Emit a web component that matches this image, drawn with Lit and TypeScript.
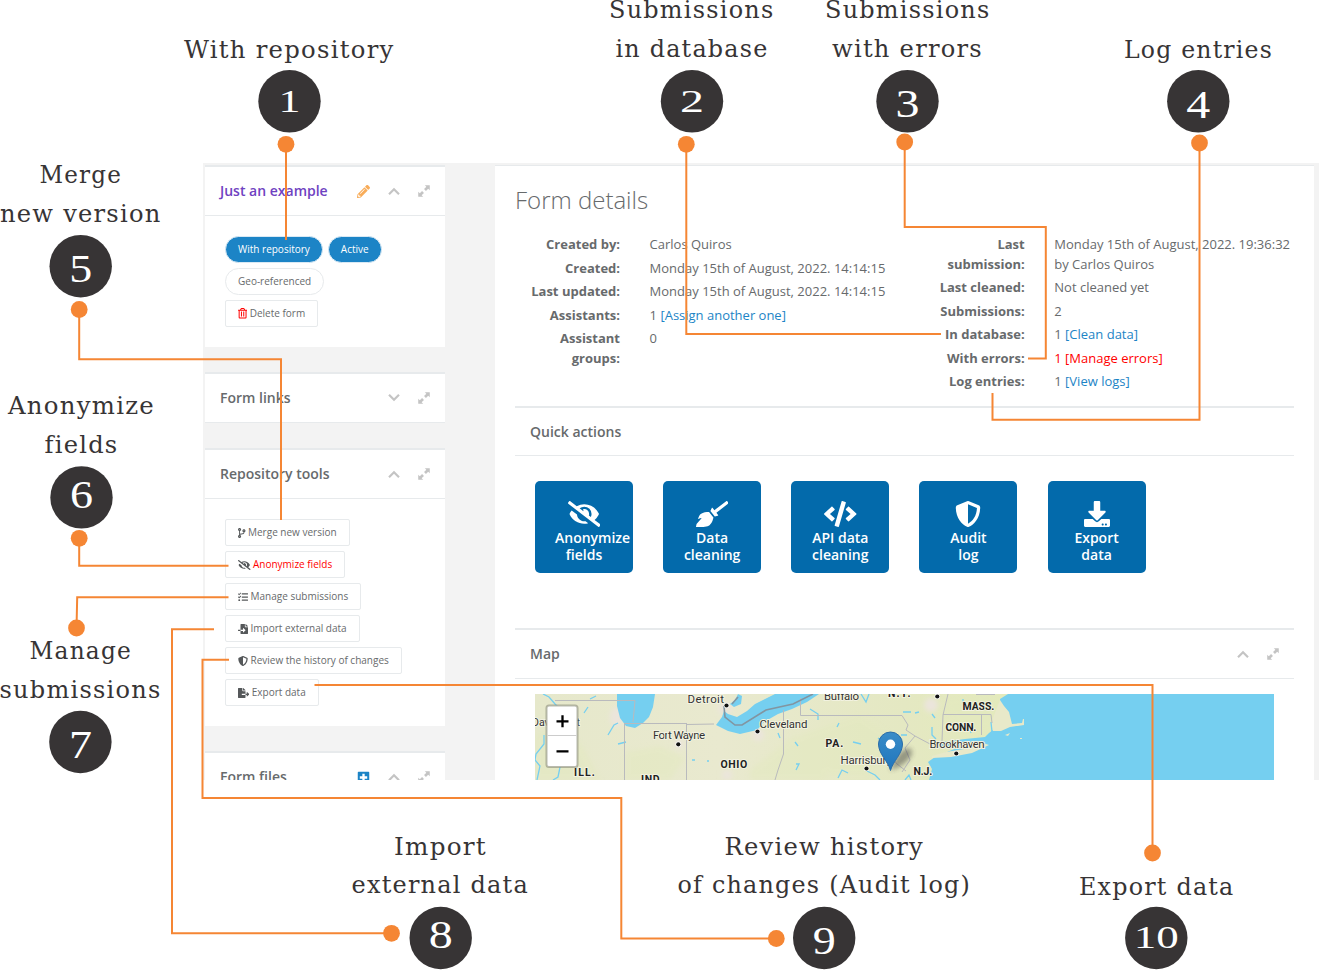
import { LitElement, html, svg, css } from "lit";
import { customElement } from "lit/decorators.js";

interface Glyph { w: number; d: string; }

const ICONS: Record<string, Glyph> = {
  eyeSlash: { w: 640, d: "M320 400c-75.85 0-137.25-58.71-142.9-133.11L72.2 185.82c-13.79 17.3-26.48 35.59-36.72 55.59a32.35 32.35 0 0 0 0 29.19C89.71 376.41 197.07 448 320 448c26.91 0 52.87-4 77.89-10.46L346 397.39a144.13 144.13 0 0 1-26 2.61zm313.82 58.1l-110.55-85.44a331.25 331.25 0 0 0 81.25-102.07 32.35 32.35 0 0 0 0-29.19C550.29 135.59 442.93 64 320 64a308.15 308.15 0 0 0-147.32 37.7L45.46 3.37A16 16 0 0 0 23 6.18L3.37 31.45A16 16 0 0 0 6.18 53.9l588.36 454.73a16 16 0 0 0 22.46-2.81l19.64-25.27a16 16 0 0 0-2.82-22.45zm-183.72-142l-39.3-30.38A94.75 94.75 0 0 0 416 256a94.76 94.76 0 0 0-121.31-92.21A47.65 47.65 0 0 1 304 192a46.64 46.64 0 0 1-1.54 10l-73.61-56.89A142.31 142.31 0 0 1 320 112a143.92 143.92 0 0 1 144 144c0 21.63-5.29 41.79-13.9 60.11z" },
  broom: { w: 640, d: "M256.47 216.77l86.73 109.18s-16.6 102.36-76.57 150.12C206.66 523.85 0 510.19 0 510.19s3.8-23.14 11-55.43l94.62-112.17c3.97-4.7-.87-11.62-6.65-9.5l-60.4 22.09c14.44-41.66 32.72-80.04 54.6-97.47 59.97-47.76 163.3-40.94 163.3-40.94zM636.53 31.03l-19.86-25c-5.49-6.9-15.52-8.05-22.41-2.56l-232.48 177.8-34.14-42.97c-5.09-6.41-15.14-5.21-18.59 2.21l-25.33 54.55 86.73 109.18 58.8-12.45c8-1.69 11.42-11.2 6.34-17.6l-34.09-42.92 232.48-177.8c6.89-5.48 8.04-15.53 2.55-22.44z" },
  code: { w: 640, d: "M278.9 511.5l-61-17.7c-6.4-1.8-10-8.5-8.2-14.9L346.2 8.7c1.8-6.4 8.5-10 14.9-8.2l61 17.7c6.4 1.8 10 8.5 8.2 14.9L293.8 503.3c-1.9 6.4-8.5 10.1-14.9 8.2zm-114-112.2l43.5-46.4c4.6-4.9 4.3-12.7-.8-17.2L117 256l90.6-79.7c5.1-4.5 5.5-12.3.8-17.2l-43.5-46.4c-4.5-4.8-12.1-5.1-17-.5L3.8 247.2c-5.1 4.7-5.1 12.8 0 17.5l144.1 135.1c4.9 4.6 12.5 4.4 17-.5zm327.2.6l144.1-135.1c5.1-4.7 5.1-12.8 0-17.5L492.1 112.1c-4.8-4.5-12.4-4.3-17 .5L431.6 159c-4.6 4.9-4.3 12.7.8 17.2L523 256l-90.6 79.7c-5.1 4.5-5.5 12.3-.8 17.2l43.5 46.4c4.5 4.9 12.1 5.1 17 .6z" },
  shield: { w: 512, d: "M466.5 83.7l-192-80a48.15 48.15 0 0 0-36.9 0l-192 80C27.7 91.1 16 108.6 16 128c0 198.5 114.5 335.7 221.5 380.3 11.8 4.9 25.1 4.9 36.9 0C360.1 472.6 496 349.3 496 128c0-19.4-11.7-36.9-29.5-44.3zM256.1 446.3l-.1-381 175.9 73.3c-3.3 151.4-82.1 261.1-175.8 307.7z" },
  download: { w: 512, d: "M216 0h80c13.3 0 24 10.7 24 24v168h87.7c17.8 0 26.7 21.5 14.1 34.1L269.7 378.3c-7.5 7.5-19.8 7.5-27.3 0L90.1 226.1c-12.6-12.6-3.7-34.1 14.1-34.1H192V24c0-13.3 10.7-24 24-24zm296 376v112c0 13.3-10.7 24-24 24H24c-13.3 0-24-10.7-24-24V376c0-13.3 10.7-24 24-24h146.7l49 49c20.1 20.1 52.5 20.1 72.6 0l49-49H488c13.3 0 24 10.7 24 24zm-124 88c0-11-9-20-20-20s-20 9-20 20 9 20 20 20 20-9 20-20zm64 0c0-11-9-20-20-20s-20 9-20 20 9 20 20 20 20-9 20-20z" },
  branch: { w: 384, d: "M384 144c0-44.2-35.8-80-80-80s-80 35.8-80 80c0 36.4 24.3 67.1 57.5 76.8-.6 16.1-4.2 28.5-11 36.9-15.4 19.2-49.3 22.4-85.2 25.7-28.2 2.6-57.4 5.4-81.3 16.9v-144c32.5-10.2 56-40.5 56-76.3 0-44.2-35.8-80-80-80S0 35.8 0 80c0 35.8 23.5 66.1 56 76.3v199.3C23.5 365.9 0 396.2 0 432c0 44.2 35.8 80 80 80s80-35.8 80-80c0-34-21.2-63.1-51.2-74.6 3.1-5.2 7.8-9.8 14.9-13.4 16.2-8.2 40.4-10.4 66.1-12.8 42.2-3.9 90-8.4 118.2-43.4 14-17.4 21.1-39.8 21.6-67.9 31.6-10.8 54.4-40.7 54.4-75.9zM80 64c8.8 0 16 7.2 16 16s-7.2 16-16 16-16-7.2-16-16 7.2-16 16-16zm0 384c-8.8 0-16-7.2-16-16s7.2-16 16-16 16 7.2 16 16-7.2 16-16 16zm224-320c8.8 0 16 7.2 16 16s-7.2 16-16 16-16-7.2-16-16 7.2-16 16-16z" },
  tasks: { w: 512, d: "M139.61 35.5a12 12 0 0 0-17 0L58.93 98.81l-22.7-22.12a12 12 0 0 0-17 0L3.53 92.41a12 12 0 0 0 0 17l47.59 47.4a12.78 12.78 0 0 0 17.61 0l15.59-15.62L156.52 69a12.09 12.09 0 0 0 .09-17zm0 159.19a12 12 0 0 0-17 0l-63.68 63.72-22.7-22.1a12 12 0 0 0-17 0L3.53 252a12 12 0 0 0 0 17L51 316.5a12.77 12.77 0 0 0 17.6 0l15.7-15.69 72.2-72.22a12 12 0 0 0 .09-16.9zM64 368c-26.49 0-48.59 21.5-48.59 48S37.53 464 64 464a48 48 0 0 0 0-96zm432 16H208a16 16 0 0 0-16 16v32a16 16 0 0 0 16 16h288a16 16 0 0 0 16-16v-32a16 16 0 0 0-16-16zm0-320H208a16 16 0 0 0-16 16v32a16 16 0 0 0 16 16h288a16 16 0 0 0 16-16V80a16 16 0 0 0-16-16zm0 160H208a16 16 0 0 0-16 16v32a16 16 0 0 0 16 16h288a16 16 0 0 0 16-16v-32a16 16 0 0 0-16-16z" },
  fileImport: { w: 512, d: "M16 288c-8.8 0-16 7.2-16 16v32c0 8.8 7.2 16 16 16h112v-64zm489-183L407.1 7c-4.5-4.5-10.6-7-17-7H384v128h128v-6.1c0-6.3-2.5-12.4-7-16.9zm-153 31V0H152c-13.3 0-24 10.7-24 24v264h128v-65.2c0-14.3 17.3-21.4 27.4-11.3L379 308c6.6 6.7 6.6 17.4 0 24l-95.7 96.4c-10.1 10.1-27.4 3-27.4-11.3V352H128v136c0 13.3 10.7 24 24 24h336c13.3 0 24-10.7 24-24V160H376c-13.2 0-24-10.8-24-24z" },
  fileExport: { w: 576, d: "M384 121.9c0-6.3-2.5-12.4-7-16.9L279.1 7c-4.5-4.5-10.6-7-17-7H256v128h128zM571 308l-95.7-96.4c-10.1-10.1-27.4-3-27.4 11.3V288h-64v64h64v65.2c0 14.3 17.3 21.4 27.4 11.3L571 332c6.6-6.6 6.6-17.4 0-24zm-379 28v-32c0-8.8 7.2-16 16-16h176V160H248c-13.2 0-24-10.8-24-24V0H24C10.7 0 0 10.7 0 24v464c0 13.3 10.7 24 24 24h336c13.3 0 24-10.7 24-24V352H208c-8.8 0-16-7.2-16-16z" },
  pencil: { w: 512, d: "M497.9 142.1l-46.1 46.1c-4.7 4.7-12.3 4.7-17 0l-111-111c-4.7-4.7-4.7-12.3 0-17l46.1-46.1c18.7-18.7 49.1-18.7 67.9 0l60.1 60.1c18.8 18.7 18.8 49.1 0 67.9zM284.2 99.8L21.6 362.4.4 483.9c-2.9 16.4 11.4 30.6 27.8 27.8l121.5-21.3 262.6-262.6c4.7-4.7 4.7-12.3 0-17l-111-111c-4.8-4.7-12.4-4.7-17.1 0zM124.1 339.9c-5.5-5.5-5.5-14.3 0-19.8l154-154c5.5-5.5 14.3-5.5 19.8 0s5.5 14.3 0 19.8l-154 154c-5.5 5.5-14.3 5.5-19.8 0zM88 424h48v36.3l-64.5 11.3-31.1-31.1L51.7 376H88v48z" },
  trash: { w: 448, d: "M268 416h24a12 12 0 0 0 12-12V188a12 12 0 0 0-12-12h-24a12 12 0 0 0-12 12v216a12 12 0 0 0 12 12zM432 80h-82.41l-34-56.7A48 48 0 0 0 274.41 0H173.59a48 48 0 0 0-41.16 23.3L98.41 80H16A16 16 0 0 0 0 96v16a16 16 0 0 0 16 16h16v336a48 48 0 0 0 48 48h288a48 48 0 0 0 48-48V128h16a16 16 0 0 0 16-16V96a16 16 0 0 0-16-16zM171.84 50.91A6 6 0 0 1 177 48h94a6 6 0 0 1 5.15 2.91L293.61 80H154.39zM368 464H80V128h288zm-212-48h24a12 12 0 0 0 12-12V188a12 12 0 0 0-12-12h-24a12 12 0 0 0-12 12v216a12 12 0 0 0 12 12z" },
  up: { w: 512, d: "M10 362L256 116l246 246-66 66-180-180L76 428z" },
  down: { w: 512, d: "M10 150l246 246 246-246-66-66-180 180L76 84z" },
  expand: { w: 512, d: "M290 10h212v212l-66-66-98 98-80-80 98-98zM10 290l66 66 98-98 80 80-98 98 66 66H10z" },
  plus: { w: 512, d: "M60 30h392q30 0 30 30v392q0 30-30 30H60q-30 0-30-30V60q0-30 30-30zM210 110v100H110v92h100v100h92V302h100v-92H302V110z" },
};

const icon = (name: string, cls = "") => {
  const g = ICONS[name];
  return html`<svg class="icon ${cls}" viewBox="0 0 ${g.w} 512" style="width:${g.w / 512}em"><path fill-rule="evenodd" d=${g.d}></path></svg>`;
};

@customElement("side-panel")
class SidePanel extends LitElement {
  static properties = { heading: {}, kind: {}, tool: {}, closed: { type: Boolean } };
  declare heading: string;
  declare kind: string;
  declare tool: string;
  declare closed: boolean;
  static styles = css`
    :host { display: block; background: #fff; border-top: 2px solid #e7eaec; }
    .head { display: flex; align-items: center; height: 48px; padding: 0 15px; border-bottom: 1px solid #e7eaec; font-size: 14px; font-weight: 600; }
    .title { flex: 1; white-space: nowrap; }
    .violet { color: #6f42c1; }
    .tools { display: flex; gap: 18px; color: #c4c4c4; font-size: 12px; }
    .icon { height: 1em; fill: currentColor; display: block; }
    .pencil { color: #f8ac59; font-size: 13px; }
    .plus { color: #1c84c6; font-size: 13px; }
  `;
  render() {
    return html`
      <div class="head">
        <span class="title ${this.kind ?? ""}">${this.heading}</span>
        <span class="tools">
          ${this.tool ? icon(this.tool, this.tool) : ""}
          ${icon(this.closed ? "down" : "up")}
          ${icon("expand")}
        </span>
      </div>
      <slot></slot>`;
  }
}

const INK = "#373435";
const LABELS: [string, number, number, number][] = [
  ["With repository", 184, 58, 210.5],
  ["Submissions", 609, 18, 165.5], ["in database", 615.5, 56.5, 153],
  ["Submissions", 825, 18, 165.5], ["with errors", 832, 56.5, 151],
  ["Log entries", 1124, 58, 149],
  ["Merge", 39.5, 183, 82.5], ["new version", 0, 221.5, 161.5],
  ["Anonymize", 8, 414.3, 147], ["fields", 44.5, 452.7, 74],
  ["Manage", 29.5, 658.7, 102.5], ["submissions", -0.5, 697.7, 162],
  ["Import", 394, 854.7, 93], ["external data", 351.5, 893.4, 177.5],
  ["Review history", 724.5, 854.7, 199.5], ["of changes (Audit log)", 677.5, 893.4, 293.5],
  ["Export data", 1079, 894.6, 155.5],
];
const BADGES: [string, number, number, number, number, number][] = [
  ["1", 289.5, 101.3, 111.7, 32, 22], ["2", 692, 101.3, 111.7, 32, 24],
  ["3", 907.5, 101.3, 116.8, 40, 24], ["4", 1198.3, 101.3, 117.6, 40, 24],
  ["5", 80.7, 266.2, 282.3, 40, 23], ["6", 81.5, 497.4, 507.5, 40, 23],
  ["7", 80.4, 742, 757.8, 40, 23], ["8", 440.7, 938, 948, 40, 24],
  ["9", 824.2, 938, 953.5, 40, 23], ["10", 1156.3, 938, 948, 32, 45],
];
const LEADS: [number, number, string][] = [
  [286, 144.3, "V240"],
  [686.3, 144.3, "V334H941"],
  [904.7, 142, "V227H1045.8V358.5H1028"],
  [1199.5, 143, "V419.8H992.5V393"],
  [79.2, 309.5, "V359.2H281V520"],
  [79.2, 538.3, "V565.8H228.5"],
  [76.5, 628, "L77.2 597.2H228.5"],
  [391.5, 933.3, "H172V629.3H214"],
  [776.3, 938.5, "H621.3V798H202.5V659.8H229"],
  [1152.5, 853, "V685H314.5"],
];

const TOOLS: [string, string, string][] = [
  ["branch", "Merge new version", ""], ["eyeSlash", "Anonymize fields", "danger"],
  ["tasks", "Manage submissions", ""], ["fileImport", "Import external data", ""],
  ["shield", "Review the history of changes", ""], ["fileExport", "Export data", ""],
];
const ACTIONS: [string, string, string][] = [
  ["eyeSlash", "Anonymize", "fields"], ["broom", "Data", "cleaning"], ["code", "API data", "cleaning"],
  ["shield", "Audit", "log"], ["download", "Export", "data"],
];
const row = (k: unknown, v: unknown) => html`<div class="row"><dt>${k}</dt><dd>${v}</dd></div>`;

@customElement("app-root")
class AppRoot extends LitElement {
  static styles = css`
    :host { display: block; position: relative; width: 1320px; height: 970px; overflow: hidden; background: #fff;
      font: 13px/19.5px "Open Sans", "Noto Sans", sans-serif; color: #676a6c; }
    * { box-sizing: border-box; }
    .shell { display: flex; margin: 163px 1px 0 203px; width: 1116px; height: 617px; overflow: hidden; background: #f3f3f3; padding: 2px 5px 0 2px; }
    .side { display: flex; flex-direction: column; gap: 25px; width: 240px; margin-right: 50px; flex: none; }
    .icon { height: 1em; fill: currentColor; display: inline-block; }
    .body { display: flex; flex-direction: column; align-items: flex-start; gap: 5px; padding: 20px; }
    .pair { display: flex; gap: 5px; }
    .first { height: 131px; }
    .stack { height: 227px; }
    .btn { display: inline-flex; align-items: center; gap: 2.5px; height: 27px; padding: 0 12px; border: 1px solid #e7eaec; border-radius: 2px; font-size: 10px; line-height: 15px; white-space: nowrap; background: #fff; }
    .btn .icon { color: #55585a; font-size: 10px; }
    .pill { border-radius: 14px; }
    .blue { background: #1c84c6; color: #fff; border-color: #d9e9f4; }
    .danger { color: #ff0000; }
    .btn .red { color: #ff0000; font-size: 10.5px; }
    .main { flex: 1; background: #fff; border-top: 1px solid #e7eaec; padding: 20px 20px 0; }
    h1 { margin: 0; height: 49px; font-size: 24px; font-weight: 300; line-height: 27px; }
    .info { display: grid; grid-template-columns: 404.7px 374px; height: 171px; }
    dl { margin: 0; }
    .row { display: flex; gap: 29.6px; margin-bottom: 4px; }
    dt { width: 105px; flex: none; text-align: right; font-weight: 700; }
    dd { margin: 0; white-space: nowrap; }
    a { color: #1c84c6; }
    .sub { display: flex; align-items: center; height: 50px; border-top: 2px solid #e7eaec; border-bottom: 1px solid #e7eaec; padding: 0 15px; font-size: 14px; font-weight: 600; }
    .map-head { height: 51px; }
    .sub span { flex: 1; }
    .sub .icon { color: #c4c4c4; font-size: 12px; margin-left: 18px; }
    .tiles { display: flex; gap: 30.15px; padding: 25px 20px 0; height: 172px; }
    .tile { width: 98px; height: 92px; padding: 20px 20px 0; border-radius: 5px; background: #036aab; color: #fff; font-size: 14px; font-weight: 600; line-height: 17px; display: flex; flex-direction: column; align-items: center; }
    .tile .first-line { min-width: 58px; text-align: center; align-self: flex-start; }
    .tile .icon { font-size: 26px; display: block; margin-bottom: 2px; }
    .map { display: block; width: 739px; height: 86px; margin: 15px 20px 0; font-family: "Roboto", sans-serif; }
    .notes { position: absolute; inset: 0; width: 1320px; height: 970px; pointer-events: none; }
    .caption { font-family: "DejaVu Serif", serif; font-size: 23.5px; letter-spacing: 1.2px; }
    .number { font-family: "Liberation Serif", serif; }
    .city { font-size: 11.5px; fill: #333; stroke: #f2f2e0; stroke-width: 2px; paint-order: stroke; }
    .state { font-size: 10.5px; font-weight: 700; fill: #222; letter-spacing: 1.2px; stroke: #f2f2e0; stroke-width: 2px; paint-order: stroke; }
  `;

  map() {
    return html`<svg class="map" viewBox="535 694 739 86">
      <defs>
        <linearGradient id="land" x1="0" x2="1"><stop offset="0" stop-color="#e6e8cb"></stop><stop offset=".25" stop-color="#e9e9cf"></stop><stop offset=".5" stop-color="#e4e8c2"></stop><stop offset=".65" stop-color="#e3eabb"></stop><stop offset="1" stop-color="#e8ebcd"></stop></linearGradient>
        <linearGradient id="pin" x1="0" y1="0" x2="0" y2="1"><stop offset="0" stop-color="#3a8cc8"></stop><stop offset="1" stop-color="#1f75bd"></stop></linearGradient>
        <filter id="soft" x="-50%" y="-50%" width="200%" height="200%"><feGaussianBlur stdDeviation="2.5"></feGaussianBlur></filter>
      </defs>
      <rect x="535" y="694" width="739" height="86" fill="url(#land)"></rect>
      <g fill="#e3e9bf" opacity=".5" filter="url(#soft)"><path d="M535 735l30-10 20 25 15 30h-65zM625 752l35-6 25 12-15 22h-45zM750 770l45-35 40 10-10 35h-75zM800 735l60-20 30 20-20 40h-40zM940 700l45-6 20 30-40 10z"></path></g>
      <g fill="#ebe5dc" filter="url(#soft)"><ellipse cx="617" cy="717" rx="7" ry="10"></ellipse><circle cx="725" cy="708" r="7"></circle><circle cx="758" cy="735" r="6"></circle><circle cx="679" cy="744" r="5"></circle><circle cx="727" cy="775" r="5"></circle><circle cx="931" cy="705" r="7"></circle></g>
      <g fill="#75cff0">
        <path d="M617 694H655L653 707 649 717 643 723 635 728 626 726 620 718 617 706z"></path>
        <path d="M716 725L722 717 724 711 728 714 737 717 747 711 755 704 769 697 775 694H819L807 702 792 709 778 714 764 722 757 730 740 734 728 731z"></path>
        <path d="M730 704l5-4 3-6 4 2-1 8-7 3z"></path>
        <path d="M1008 694H1274V780H929L932 769 928 762 935 757 952 750 967 744 953 748 936 747 932 741 943 742 965 739 985 737 989 733 1002 723 997 731 1006 727 1011 724 1024 718V725L1012 727 1006 719 1007 710 1000 706 1000 699z"></path>
      </g>
      <g fill="#e8e9c9"><path d="M932 756l14-4 24-4 13-5 6 2-17 8-21 4-19 1zM1000 700l4 6 5 6 3 12 10-1 1-4 1 0 0 6-14 2-9 4-8 0-2-8zM1005 735l5-2-2 3zM1020 738l2 0v1h-2z"></path></g>
      <g stroke="#75cff0" fill="none" stroke-width="1.3">
        <path d="M543 694l6 3 6 7 5 5M544 735v9l-8 10-1 6 5 6-3 14M568 735l5 12-5 12-8 8-2 10-5 3M584 713l4-6M608 735l6-10 4-2M618 744l8-2M590 699l6-3M861 694l5 8 3-8M878 738l8 5 3 8M867 771l8 4 5 5M810 709l8 5 0 6M838 778l4-8 6 3M853 742l8 2M903 712h8M932 714l3 4M932 727v8l4 4M963 703v-4M968 724l3 9M991 722l1 10M905 780l4-5 2 5M778 733l2 5M796 764h3l-3 6M692 760h3M707 761h2M795 742l3 4M839 723l-2 4M901 735l6 0M915 713l4-1"></path>
      </g>
      <g stroke="#b9babd" fill="none" stroke-width="1">
        <path d="M555 700.5H635L633 722M624 723.5H687M687 724.5L714 724M624.5 723V780M686.5 724V780M783.5 710V754L778 770 775 780M800.5 698V715.5H902L908 725 906 730 915 736 930 744M915 736L905 748 910 760 902 772M889 754l8 10 9 7M948 694L943 715 942 741M943 714.5H991L992 723M981.5 715V735M976 694.5h19"></path>
        <path d="M724 706L725 717 735 725H742L766 710 793 704 813 694M732 704l6-7" stroke="#8295a1" stroke-width="1.6"></path>
      </g>
      <g fill="#111" stroke="#fff" stroke-width="1.3" paint-order="stroke"><circle cx="726.5" cy="705.5" r="2.1"></circle><circle cx="757.5" cy="731.5" r="2.1"></circle><circle cx="678.3" cy="744.3" r="2.1"></circle><circle cx="866.5" cy="768.5" r="2.1"></circle><circle cx="937.3" cy="696.5" r="2.1"></circle><circle cx="956.3" cy="753.5" r="2.1"></circle></g>
      <g class="city">
        <text x="687.5" y="702.5" textLength="36.5">Detroit</text><text x="759.5" y="728.3" textLength="48">Cleveland</text>
        <text x="653" y="739.3" textLength="52">Fort Wayne</text><text x="824" y="699.5" textLength="35">Buffalo</text>
        <text x="840.5" y="763.5" textLength="52">Harrisburg</text><text x="929.5" y="748.3" textLength="55">Brookhaven</text>
        <text x="532" y="725.5" textLength="48" lengthAdjust="spacingAndGlyphs">Davenport</text>
      </g>
      <g class="state">
        <text x="888" y="696.5">N.Y.</text><text x="962.5" y="710" textLength="33">MASS.</text><text x="945.5" y="731" textLength="32">CONN.</text>
        <text x="825.5" y="747" textLength="19">PA.</text><text x="720.5" y="767.5" textLength="28">OHIO</text>
        <text x="574" y="775.5" textLength="22">ILL.</text><text x="641" y="782.5" textLength="23">IND.</text><text x="913.5" y="775" textLength="20">N.J.</text>
      </g>
      <path d="M890 770Q898 750 908 748Q916 750 908 760Q900 768 890 770z" fill="#333" opacity=".45" filter="url(#soft)"></path>
      <path d="M890.5 770.5C888 761 878.5 754 878.5 744A12 12 0 0 1 902.5 744C902.5 754 893 761 890.5 770.5z" fill="url(#pin)" stroke="#2a6ca8"></path>
      <circle cx="890.5" cy="744.3" r="4.7" fill="#fff"></circle>
      <rect x="546.5" y="705.5" width="31" height="61.500" rx="2.500" fill="#fff" stroke="#8a8c78" stroke-opacity=".6" stroke-width="2"></rect>
      <path d="M547.5 735.5h29" stroke="#ccc"></path>
      <path d="M556.5 721.3h12M562.5 715.3v12M556.5 751.3h12" stroke="#000" stroke-width="2.3"></path>
    </svg>`;
  }

  render() {
    return html`
      <div class="shell">
        <div class="side">
          <side-panel heading="Just an example" kind="violet" tool="pencil">
            <div class="body first">
              <div class="pair"><span class="btn pill blue">With repository</span><span class="btn pill blue">Active</span></div>
              <span class="btn pill">Geo-referenced</span>
              <span class="btn">${icon("trash", "red")}Delete form</span>
            </div>
          </side-panel>
          <side-panel heading="Form links" closed></side-panel>
          <side-panel heading="Repository tools">
            <div class="body stack">
              ${TOOLS.map(([i, t, c]) => html`<span class="btn">${icon(i)}<span class=${c}>${t}</span></span>`)}
            </div>
          </side-panel>
          <side-panel heading="Form files" tool="plus"></side-panel>
        </div>
        <div class="main">
          <h1>Form details</h1>
          <div class="info">
            <dl>
              ${row("Created by:", "Carlos Quiros")}
              ${row("Created:", "Monday 15th of August, 2022. 14:14:15")}
              ${row("Last updated:", "Monday 15th of August, 2022. 14:14:15")}
              ${row("Assistants:", html`1 <a>[Assign another one]</a>`)}
              ${row(html`Assistant<br>groups:`, "0")}
            </dl>
            <dl>
              ${row(html`Last<br>submission:`, html`Monday 15th of August, 2022. 19:36:32<br>by Carlos Quiros`)}
              ${row("Last cleaned:", "Not cleaned yet")}
              ${row("Submissions:", "2")}
              ${row("In database:", html`1 <a>[Clean data]</a>`)}
              ${row("With errors:", html`<span class="danger">1 [Manage errors]</span>`)}
              ${row("Log entries:", html`1 <a>[View logs]</a>`)}
            </dl>
          </div>
          <div class="sub"><span>Quick actions</span></div>
          <div class="tiles">
            ${ACTIONS.map(([i, a, b]) => html`<div class="tile">${icon(i)}<span class="first-line">${a}</span><span>${b}</span></div>`)}
          </div>
          <div class="sub map-head"><span>Map</span>${icon("up")}${icon("expand")}</div>
          ${this.map()}
        </div>
      </div>
      <svg class="notes" viewBox="0 0 1320 970">
        ${LEADS.map(([x, y, d]) => svg`<path d="M${x} ${y}${d}" fill="none" stroke="#f58634" stroke-width="2"></path><circle cx=${x} cy=${y} r="8.4" fill="#f58634"></circle>`)}
        ${BADGES.map(([n, x, y, base, size, w]) => svg`<circle cx=${x} cy=${y} r="31.2" fill=${INK}></circle><text class="number" x=${x} y=${base} font-size=${size} textLength=${w} lengthAdjust="spacingAndGlyphs" text-anchor="middle" fill="#fff">${n}</text>`)}
        ${LABELS.map(([t, x, y, w]) => svg`<text class="caption" x=${x} y=${y} textLength=${w} lengthAdjust="spacingAndGlyphs" fill=${INK}>${t}</text>`)}
      </svg>`;
  }
}
